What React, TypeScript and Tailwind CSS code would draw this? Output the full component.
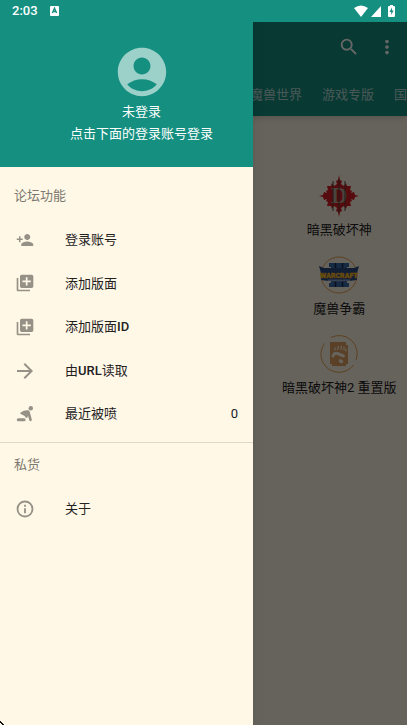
import type { ReactNode } from "react";
import {
  MdAccountCircle,
  MdArrowForward,
  MdMoreVert,
  MdPersonAdd,
  MdSearch,
} from "react-icons/md";

const LibraryAddIcon = () => (
  <svg width="20" height="20" viewBox="0 0 24 24" fill="currentColor" aria-hidden="true">
    <path d="M4 6H2v14c0 1.1.9 2 2 2h14v-2H4V6zm16-4H8c-1.1 0-2 .9-2 2v12c0 1.1.9 2 2 2h12c1.1 0 2-.9 2-2V4c0-1.1-.9-2-2-2zm-1 9h-4v4h-2v-4H9V9h4V5h2v4h4v2z" />
  </svg>
);

const InfoIcon = () => (
  <svg width="20" height="20" viewBox="0 0 24 24" fill="none" stroke="currentColor" strokeWidth="2.2" aria-hidden="true">
    <circle cx="12" cy="12" r="9" />
    <path d="M12 11V17M12 7V9.2" />
  </svg>
);

const KneelIcon = () => (
  <svg width="18" height="16" viewBox="0 0 18 16" fill="currentColor" aria-hidden="true">
    <circle cx="14.8" cy="2.3" r="2.2" />
    <path d="M4.6 6.4Q8 3.8 12.6 4.2Q13.6 4.4 14 6.8L15.8 13.6Q15.8 15.2 14.6 15.2Q13.6 15.2 13.2 14L12 9.8L11.6 11.2Q11.2 12 9.4 11.6Q9.8 10.2 7.8 9.4L4.8 8Q3.6 7.2 4.6 6.4Z" />
    <rect x="0.8" y="12.2" width="8.8" height="3" rx="1.5" />
  </svg>
);

const DiabloLogo = () => (
  <svg width="40" height="42" viewBox="0 0 40 42" aria-hidden="true">
    <path
      fill="#d81c24"
      d="M20 0L21 5L23 6L22 9L25 11L27 8L28 11L32 11L31 15L33 16L32 18L35 17L36 20L40 21L36 22L35 25L32 24L33 26L31 27L32 31L28 31L27 34L25 31L22 33L23 36L21 37L20 42L19 37L17 36L18 33L15 31L13 34L12 31L8 31L9 27L7 26L8 24L5 25L4 22L0 21L4 20L5 17L8 18L7 16L9 15L8 11L12 11L13 8L15 11L18 9L17 6L19 5Z"
    />
    <text
      x="20"
      y="28"
      textAnchor="middle"
      fontFamily="Liberation Serif, serif"
      fontWeight="700"
      fontSize="23"
      fill="#b8aa98"
    >
      D
    </text>
    <path stroke="#51453d" d="M14 6V36M20 4V38M26 6V36" />
  </svg>
);

const WarcraftLogo = () => (
  <svg width="40" height="40" viewBox="0 0 40 40" aria-hidden="true">
    <circle cx="20" cy="20" r="18" fill="none" stroke="#e8a050" />
    <path fill="#3a6aa8" d="M10 8H30V12H28V28H30V32H10V28H12V12H10Z" />
    <path stroke="#16284a" strokeWidth="1.5" d="M16.5 8V32M23.5 8V32" />
    <path fill="#2c4a80" d="M0 11L5 13H35L40 11L37.5 20L38 25L30 26L20 27L10 26L2 25L2.5 20Z" />
    <path fill="#8aa4d0" d="M9 24.5H31V26L20 26.5L9 26Z" />
    <text
      x="20"
      y="23"
      textAnchor="middle"
      fontFamily="Roboto, sans-serif"
      fontWeight="900"
      fontSize="7"
      fill="#ffcc28"
      stroke="#ffb020"
      strokeWidth="0.3"
    >
      WARCRAFT
    </text>
  </svg>
);

const PawLogo = () => (
  <svg width="40" height="40" viewBox="0 0 40 40" aria-hidden="true">
    <path fill="none" stroke="#e8a050" d="M12 3.5A18 18 0 0 1 37 26M34.5 31A18 18 0 0 1 5.5 9.5" />
    <path fill="#e0a060" d="M11 8H27V11H29V30H27V32H13V30H11Z" />
    <g fill="none" stroke="#fff8e6" strokeLinecap="round">
      <path strokeWidth="1.2" d="M16.5 14L15.5 16M19.5 12.5L18.5 15.5M22.5 12L22 15.5M25 13L25 16M27 15L27 17" />
      <path strokeWidth="3" d="M14 22Q15 18.5 18.5 19.5L24.5 22" />
      <path strokeWidth="3.6" d="M21.5 27L22.5 27.5" />
    </g>
  </svg>
);

const GAMES = [
  { name: "暗黑破坏神", logo: <DiabloLogo /> },
  { name: "魔兽争霸", logo: <WarcraftLogo /> },
  { name: "暗黑破坏神2 重置版", logo: <PawLogo /> },
];

const TABS = ["魔兽世界", "游戏专版", "国"];

const FORUM_ITEMS = [
  { label: "登录账号", icon: <MdPersonAdd size={18} /> },
  { label: "添加版面", icon: <LibraryAddIcon /> },
  { label: <>添加版面<b className="font-medium">ID</b></>, icon: <LibraryAddIcon /> },
  { label: <>由<b className="font-medium">URL</b>读取</>, icon: <MdArrowForward size={24} /> },
  { label: "最近被喷", icon: <KneelIcon />, count: 0 },
];

const StatusBar = () => (
  <div className="relative z-20 flex h-[22px] items-center bg-[#148f80] px-3 text-white">
    <span className="text-[13px] font-medium">2:03</span>
    <svg className="ml-3" width="9" height="10" viewBox="0 0 9 10" aria-hidden="true">
      <rect width="9" height="10" rx="1" fill="#fff" />
      <path d="M2.4 7L4.5 2.2L6.6 7M3.2 5.5H5.8" fill="none" stroke="#148f80" strokeWidth="1.4" />
    </svg>
    <div className="ml-auto flex items-center gap-[3px]">
      <svg width="14" height="12" viewBox="0 0 14 12" fill="currentColor" aria-hidden="true">
        <path d="M0 3Q7 -2 14 3L7 12Z" />
      </svg>
      <svg width="10" height="11" viewBox="0 0 10 11" fill="currentColor" aria-hidden="true">
        <path d="M10 0V11H0Z" />
      </svg>
      <svg className="ml-1" width="7" height="12" viewBox="0 0 7 12" aria-hidden="true">
        <path fill="#fff" d="M2 0H5V1H6Q7 1 7 2V11Q7 12 6 12H1Q0 12 0 11V2Q0 1 1 1H2Z" />
        <path fill="#148f80" d="M4 2.5L1.5 7H3.2V10L5.6 5.5H4Z" />
      </svg>
    </div>
  </div>
);

const MenuItem = ({ label, icon, count }: { label: ReactNode; icon: ReactNode; count?: number }) => (
  <button type="button" className="flex w-full items-center pl-[13px] pr-[15px] text-left text-[13px] text-[#23211e]">
    <span className="flex w-6 shrink-0 justify-center text-[#969187]">{icon}</span>
    <span className="ml-7">{label}</span>
    {count !== undefined && <span className="ml-auto">{count}</span>}
  </button>
);

const SectionTitle = ({ children }: { children: ReactNode }) => (
  <h2 className="flex h-11 items-center pl-[14px] text-[13px] text-[#7d7970]">{children}</h2>
);

const Drawer = () => (
  <aside className="absolute inset-y-0 left-0 z-10 w-[62.2%] bg-[#fff8e6] shadow-lg">
    <div className="flex flex-col items-center bg-[#148f80] pb-[22px] pl-[30px] pt-[43px] text-[13px] leading-[22px] text-white">
      <MdAccountCircle size={58} className="text-[#9cd1ca]" />
      <p>未登录</p>
      <p>点击下面的登录账号登录</p>
    </div>
    <nav className="pt-[7px]">
      <SectionTitle>论坛功能</SectionTitle>
      <div className="grid h-[218px] auto-rows-fr">
        {FORUM_ITEMS.map((item, idx) => (
          <MenuItem key={idx} {...item} />
        ))}
      </div>
      <div className="mt-[6px] border-t border-[#dfd8c8]">
        <SectionTitle>私货</SectionTitle>
        <div className="grid h-11">
          <MenuItem label="关于" icon={<InfoIcon />} />
        </div>
      </div>
    </nav>
    {/* pointer tip resting in the corner */}
    <svg className="absolute bottom-0 left-0" width="4" height="4" viewBox="0 0 4 4" aria-hidden="true">
      <path d="M0 0H1V1H2V2H3V3H4V4H2V3H1V2H0Z" fill="#111" />
    </svg>
  </aside>
);

const ForumPage = () => (
  <>
    <header className="bg-[#148f80] text-white shadow-md">
      <div className="flex h-[50px] items-center justify-end gap-4 pr-[9px]">
        <button type="button" aria-label="搜索">
          <MdSearch size={22} />
        </button>
        <button type="button" aria-label="更多">
          <MdMoreVert size={22} />
        </button>
      </div>
      <div className="flex h-11 items-center justify-end gap-5 overflow-hidden whitespace-nowrap pt-px text-[13px] text-white/70">
        {TABS.map((tab) => (
          <button key={tab} type="button">
            {tab}
          </button>
        ))}
      </div>
    </header>
    <main className="grid grid-cols-3 gap-y-[15px] pt-[60px]">
      {GAMES.map((game) => (
        <div key={game.name} className="col-start-3 flex flex-col items-center gap-1">
          <div className="flex h-10 items-center">{game.logo}</div>
          <span className="whitespace-nowrap text-[13px] leading-5 text-[#23211e]">{game.name}</span>
        </div>
      ))}
    </main>
  </>
);

const App = () => {
  return (
    <div className="relative min-h-screen overflow-hidden bg-[#fff8e6] font-[Roboto,'Noto_Sans_CJK_SC',sans-serif]">
      <StatusBar />
      <ForumPage />
      <div className="absolute inset-0 bg-black/60" />
      <Drawer />
    </div>
  );
};

export default App;
